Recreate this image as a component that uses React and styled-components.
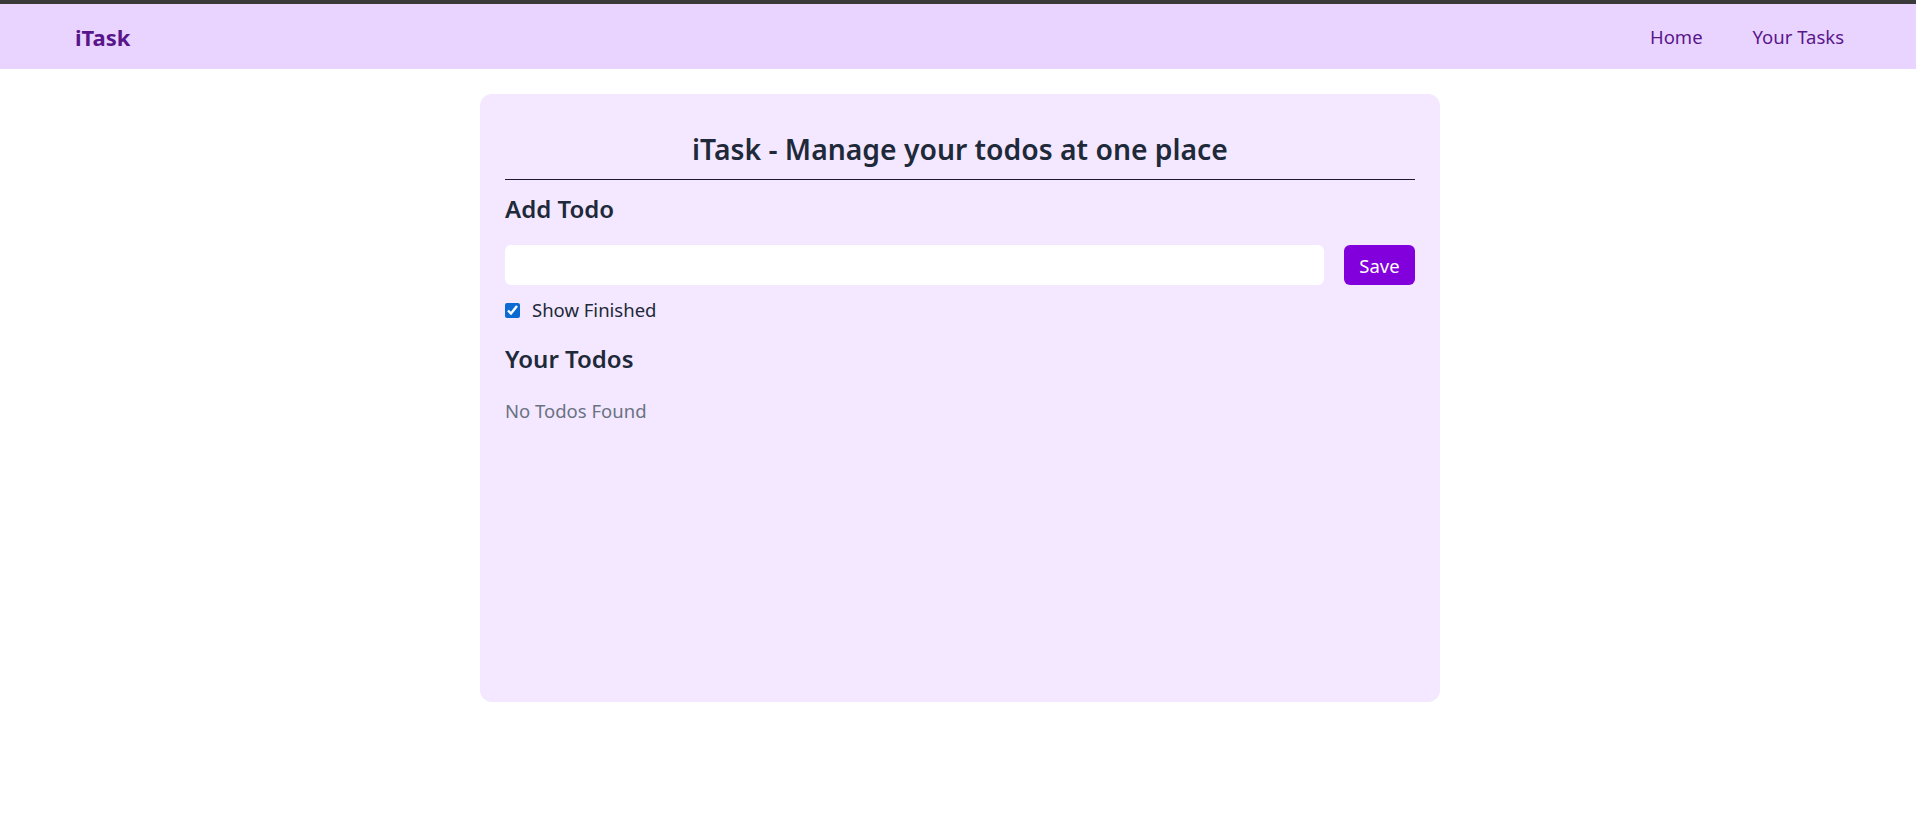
import React, { useState } from 'react'
import styled, { createGlobalStyle } from 'styled-components'

const GlobalStyle = createGlobalStyle`
  * { box-sizing: border-box; }
  body {
    margin: 0;
    background: #ffffff;
    font-family: "Noto Sans", "Open Sans", sans-serif;
    color: #1e2939;
  }
`

const Nav = styled.nav`
  height: 69px;
  border-top: 4px solid #3a3a3a;
  background: #e9d4ff;
  display: flex;
  align-items: center;
  justify-content: space-between;
  padding: 0 72px 0 75px;
`

const Logo = styled.span`
  font-size: 22px;
  font-weight: 700;
  color: #59168b;
  cursor: pointer;
`

const Links = styled.ul`
  display: flex;
  gap: 50px;
  list-style: none;
  margin: 0;
  padding: 0;
  li {
    font-size: 18.5px;
    color: #59168b;
    cursor: pointer;
  }
  li:hover {
    font-weight: 700;
  }
`

const Page = styled.div`
  padding-left: 4px;
`

const Card = styled.main`
  width: 960px;
  height: 608px;
  margin: 25px auto 0;
  padding: 25px;
  border-radius: 12px;
  background: #f3e8ff;
`

const Title = styled.h1`
  margin: 12px 0 0;
  text-align: center;
  font-size: 28.3px;
  line-height: 36px;
  font-weight: 600;
`

const Rule = styled.hr`
  margin: 12px 0 0;
  border: none;
  border-top: 1px solid #1e1b2e;
`

const Heading = styled.h2`
  margin: ${(p) => p.$top}px 0 0;
  font-size: 24px;
  line-height: 32px;
  font-weight: 600;
`

const AddRow = styled.div`
  display: flex;
  gap: 20px;
  margin-top: 20px;
`

const TodoInput = styled.input`
  flex: 1;
  height: 40px;
  border: none;
  border-radius: 6px;
  background: #ffffff;
  padding: 0 12px;
  font: inherit;
  font-size: 18px;
  outline: none;
`

const SaveButton = styled.button`
  width: 71px;
  height: 40px;
  padding: 0;
  border: none;
  border-radius: 6px;
  background: #8200db;
  color: #ffffff;
  font-family: inherit;
  font-size: 18.5px;
  cursor: pointer;
  &:hover { background: #6e11b0; }
`

const CheckRow = styled.label`
  display: flex;
  align-items: center;
  gap: 12px;
  margin-top: 11px;
  font-size: 18.5px;
  line-height: 28px;
  input {
    width: 15px;
    height: 15px;
    margin: 0;
    accent-color: #0b6bd3;
  }
`

const Empty = styled.p`
  margin: 22px 0 0;
  font-size: 18.5px;
  line-height: 28px;
  color: #6a7282;
`

export default function App() {
  const [todo, setTodo] = useState('')
  const [showFinished, setShowFinished] = useState(true)

  return (
    <>
      <GlobalStyle />
      <Nav>
        <Logo>iTask</Logo>
        <Links>
          <li>Home</li>
          <li>Your Tasks</li>
        </Links>
      </Nav>
      <Page>
        <Card>
          <Title>iTask - Manage your todos at one place</Title>
          <Rule />
          <Heading $top={13}>Add Todo</Heading>
          <AddRow>
            <TodoInput value={todo} onChange={(e) => setTodo(e.target.value)} />
            <SaveButton>Save</SaveButton>
          </AddRow>
          <CheckRow>
            <input type="checkbox" checked={showFinished} onChange={() => setShowFinished(!showFinished)} />
            Show Finished
          </CheckRow>
          <Heading $top={19}>Your Todos</Heading>
          <Empty>No Todos Found</Empty>
        </Card>
      </Page>
    </>
  )
}
